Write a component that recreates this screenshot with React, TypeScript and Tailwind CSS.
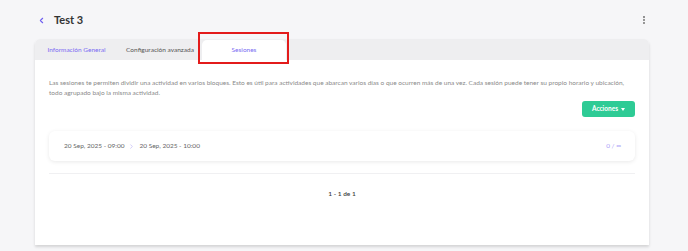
import { ChevronLeft, ChevronRight, EllipsisVertical } from "lucide-react";

const tabs = [
  { label: "Información General", state: "link" },
  { label: "Configuración avanzada", state: "idle" },
  { label: "Sesiones", state: "active" },
];

export default function App() {
  return (
    <div className="min-h-[251px] w-[688px] bg-[#f6f6f8] pl-[35px] pr-[39px] pt-[12px] font-['Lato',sans-serif]">
      {/* Header */}
      <div className="flex h-[16px] items-center justify-between">
        <div className="flex items-center">
          <ChevronLeft className="ml-[2px] h-[9px] w-[9px] text-[#6f5ff0]" strokeWidth={3} />
          <h1 className="ml-[8px] text-[11px] font-bold text-[#333]">Test 3</h1>
        </div>
        <EllipsisVertical className="h-[10px] w-[10px] text-[#777]" strokeWidth={3} />
      </div>

      {/* Card */}
      <div className="mt-[11px] rounded-t-[5px] bg-white shadow-[0_2px_3px_rgba(0,0,0,0.14)]">
        <div className="flex h-[21px] rounded-t-[5px] bg-[#eeeef0]">
          {tabs.map((t) => (
            <div
              key={t.label}
              className={
                t.state === "active"
                  ? "relative mt-[1px] flex w-[84px] items-center justify-center rounded-t-[5px] bg-white text-[6.5px] text-[#7b6cf2]"
                  : t.state === "link"
                  ? "flex w-[83px] items-center justify-center text-[6.5px] text-[#7b6cf2]"
                  : "flex w-[84px] items-center justify-center text-[6.5px] text-[#555]"
              }
            >
              {t.label}
              {t.state === "active" && (
                <div className="absolute -left-[4px] -right-[3px] -top-[8px] -bottom-[4px] z-10 border-2 border-[#e31b1b]" />
              )}
            </div>
          ))}
        </div>

        <div className="px-[14px] pt-[18px] pb-[46px]">
          <p className="text-[6.5px] leading-[9.5px] text-[#8a8a8a]">
            Las sesiones te permiten dividir una actividad en varios bloques. Esto es útil para actividades que abarcan
            varios días o que ocurren más de una vez. Cada sesión puede tener su propio horario y ubicación,
            <br />
            todo agrupado bajo la misma actividad.
          </p>

          <div className="mt-[4px] flex justify-end">
            <button
              type="button"
              className="flex h-[16px] w-[53px] items-center justify-center gap-[3px] rounded-[3px] bg-[#2ecb95] text-[6.5px] font-bold text-white"
            >
              Acciones
              <span className="h-0 w-0 border-x-[2.5px] border-t-[3px] border-x-transparent border-t-white" />
            </button>
          </div>

          {/* Session row */}
          <div className="mt-[14px] flex h-[30px] items-center justify-between rounded-[6px] bg-white pl-[15px] pr-[14px] shadow-[0_1px_4px_rgba(0,0,0,0.09)]">
            <div className="flex items-center text-[6.5px] text-[#666]">
              <span>20 Sep, 2025 - 09:00</span>
              <ChevronRight className="mx-[4px] h-[7px] w-[7px] text-[#b5abf5]" strokeWidth={2} />
              <span>20 Sep, 2025 - 10:00</span>
            </div>
            <span className="text-[6.5px] text-[#ab9ff7]">0 / ∞</span>
          </div>

          <div className="mt-[12px] border-t border-[#f0f0f2]" />

          <div className="mt-[15px] text-center text-[6.5px] font-semibold text-[#3a3a3a]">1 - 1 de 1</div>
        </div>
      </div>
    </div>
  );
}
